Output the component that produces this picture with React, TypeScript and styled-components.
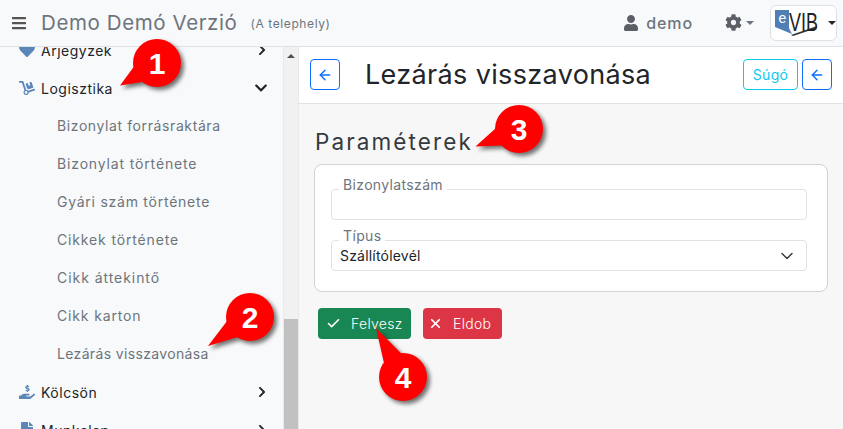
import React from 'react';
import styled, { createGlobalStyle } from 'styled-components';
import {
	FaBars,
	FaChevronDown,
	FaChevronRight,
	FaCog,
	FaDolly,
	FaFileAlt,
	FaHandHoldingUsd,
	FaHeart,
	FaUser,
} from 'react-icons/fa';
import type { IconType } from 'react-icons';
import { ArrowLeft, Check, ChevronDown, X } from 'lucide-react';

const GlobalStyle = createGlobalStyle`
	html, body {
		margin: 0;
		height: 100%;
		overflow: hidden;
	}
	body {
		font-family: Inter, "Noto Sans", "Liberation Sans", sans-serif;
		color: #212529;
	}
	#root {
		height: 100%;
	}
`;

const Page = styled.div`
	height: 429px;
	display: flex;
	flex-direction: column;
	position: relative;
	overflow: hidden;
`;

const TopBar = styled.header`
	flex: 0 0 47px;
	box-sizing: border-box;
	display: flex;
	align-items: center;
	background: #f8f9fa;
	border-bottom: 1px solid #dee2e6;
	padding: 0 6px 1px 11px;
	color: #6c757d;
`;

const Burger = styled(FaBars)`
	color: #555;
`;

const Brand = styled.span`
	margin-left: 14px;
	font-size: 20.5px;
	letter-spacing: 0.6px;
	white-space: nowrap;
`;

const Site = styled.span`
	margin-left: 13px;
	font-size: 12px;
	letter-spacing: 0.6px;
	white-space: nowrap;
	padding-top: 1px;
`;

const TopRight = styled.div`
	margin-left: auto;
	display: flex;
	align-items: center;
	color: #5a6066;
`;

const UserName = styled.span`
	margin-left: 7px;
	font-size: 16px;
	font-weight: 500;
	letter-spacing: 0.9px;
	color: #6c757d;
`;

const Settings = styled.span`
	margin-left: 32px;
	display: flex;
	align-items: center;
`;

const Caret = styled.i<{ $color: string; $gap: number }>`
	display: block;
	margin-left: ${({ $gap }) => $gap}px;
	border-top: 4px solid ${({ $color }) => $color};
	border-left: 4px solid transparent;
	border-right: 4px solid transparent;
`;

const LogoButton = styled.div`
	margin-left: 16px;
	width: 67px;
	height: 36px;
	box-sizing: border-box;
	background: #fff;
	border: 1px solid #dee2e6;
	border-radius: 6px;
	display: flex;
	align-items: center;
	padding-left: 4px;
	margin-top: 1px;
`;

const Body = styled.div`
	flex: 1;
	min-height: 0;
	display: flex;
`;

const Sidebar = styled.nav`
	flex: 0 0 298px;
	display: flex;
	background: #f8f9fa;
	overflow: hidden;
`;

const Menu = styled.ul`
	flex: 1;
	list-style: none;
	margin: -16px 0 0;
	padding: 0;
`;

const MenuRow = styled.li`
	height: 38px;
	box-sizing: border-box;
	display: flex;
	align-items: center;
	padding: 0 15px 0 19px;
	font-size: 14px;
	letter-spacing: 0.5px;
	white-space: nowrap;
`;

const SubRow = styled.li<{ $track: number }>`
	height: 38px;
	display: flex;
	align-items: center;
	padding: 0 0 2px 57px;
	box-sizing: border-box;
	font-size: 14px;
	letter-spacing: ${({ $track }) => $track}px;
	color: #6c757d;
	white-space: nowrap;
`;

const MenuIcon = styled.span`
	width: 22px;
	display: flex;
	color: #5b86b8;
	font-size: 16px;
`;

const MenuArrow = styled.span<{ $open?: boolean }>`
	margin-left: auto;
	display: flex;
	font-size: ${({ $open }) => ($open ? '14px' : '12px')};
	color: #212529;
`;

const ScrollTrack = styled.div`
	flex: 0 0 15px;
	display: flex;
	flex-direction: column;
	background: #f1f1f1;
	border-left: 1px solid #e9e9e9;
	box-sizing: border-box;
`;

const ScrollUp = styled.i`
	display: block;
	margin: 7px auto 0;
	border-bottom: 4px solid #505050;
	border-left: 4px solid transparent;
	border-right: 4px solid transparent;
`;

const ScrollThumb = styled.div`
	margin-top: auto;
	height: 110px;
	background: #c1c1c1;
`;

const Main = styled.main`
	flex: 1;
	min-width: 0;
	display: flex;
	flex-direction: column;
	background: #f7f7f7;
	border-left: 1px solid #e9e9e9;
`;

const TitleBar = styled.div`
	flex: 0 0 57px;
	box-sizing: border-box;
	display: flex;
	align-items: center;
	gap: 4px;
	background: #fff;
	border-bottom: 1px solid #dee2e6;
	padding: 0 11px 1px 11px;
`;

const OutlineButton = styled.button<{ $tone: string; $wide?: boolean }>`
	width: ${({ $wide }) => ($wide ? '55px' : '30px')};
	height: 31px;
	padding: 0;
	display: flex;
	align-items: center;
	justify-content: center;
	background: #fff;
	border: 1px solid ${({ $tone }) => $tone};
	border-radius: 4px;
	color: ${({ $tone }) => $tone};
	font: inherit;
	font-size: 14px;
	letter-spacing: 0.3px;
`;

const PageTitle = styled.h1`
	flex: 1;
	margin: 0 0 0 21px;
	font-size: 27px;
	font-weight: 400;
	letter-spacing: 0.35px;
	white-space: nowrap;
`;

const Content = styled.div`
	padding: 24px 15px 0;
`;

const SectionTitle = styled.h2`
	margin: 0 0 9px 1px;
	font-size: 22.5px;
	line-height: 27px;
	font-weight: 400;
	letter-spacing: 2.1px;
	color: #343a40;
`;

const Card = styled.section`
	height: 128px;
	box-sizing: border-box;
	padding: 24px 20px 0 16px;
	background: #fff;
	border: 1px solid #d3d3d3;
	border-radius: 8px;
	display: flex;
	flex-direction: column;
	gap: 20px;
`;

const Field = styled.div`
	position: relative;
	height: 31px;
	box-sizing: border-box;
	border: 1px solid #dee2e6;
	border-radius: 4px;
	display: flex;
	align-items: center;
	justify-content: space-between;
	padding: 0 9px 0 8px;
	font-size: 14px;
	letter-spacing: 0.2px;
`;

const FieldLabel = styled.label`
	position: absolute;
	left: 7px;
	top: -14px;
	padding: 0 4px;
	background: #fff;
	line-height: 18px;
	height: 18px;
	font-size: 14px;
	letter-spacing: 0.35px;
	color: #6c757d;
`;

const Actions = styled.div`
	display: flex;
	gap: 12px;
	margin: 16px 0 0 4px;
`;

const ActionButton = styled.button<{ $bg: string; $width: number; $pad: number }>`
	width: ${({ $width }) => $width}px;
	height: 31px;
	box-sizing: border-box;
	padding: 0 0 0 ${({ $pad }) => $pad}px;
	display: flex;
	align-items: center;
	gap: 10px;
	border: 0;
	border-radius: 4px;
	background: ${({ $bg }) => $bg};
	color: #fff;
	font: inherit;
	font-size: 14px;
	font-weight: 300;
	letter-spacing: 0.3px;
`;

const CalloutMark = styled.svg<{ $left: number; $top: number }>`
	position: absolute;
	left: ${({ $left }) => $left}px;
	top: ${({ $top }) => $top}px;
	overflow: visible;
`;

const CalloutDigit = styled.text`
	font-family: "Liberation Sans", Arial, sans-serif;
	font-size: 30px;
	font-weight: 700;
	fill: #fff;
`;

const SideItem = ({
	icon: Icon,
	open,
	children,
}: {
	icon: IconType;
	open?: boolean;
	children: string;
}) => (
	<MenuRow>
		<MenuIcon>
			<Icon />
		</MenuIcon>
		{children}
		<MenuArrow $open={open}>{open ? <FaChevronDown /> : <FaChevronRight />}</MenuArrow>
	</MenuRow>
);

const Callout = ({
	n,
	cx,
	cy,
	tx,
	ty,
}: {
	n: number;
	cx: number;
	cy: number;
	tx: number;
	ty: number;
}) => {
	// tail leaves the circle at right angles to the line towards the tip
	const r = 24;
	const dx = tx - cx;
	const dy = ty - cy;
	const len = Math.hypot(dx, dy);
	const ux = dx / len;
	const uy = dy / len;
	const spread = 12;
	const bx = ux * 14;
	const by = uy * 14;
	const a = `${bx - uy * spread},${by + ux * spread}`;
	const b = `${bx + uy * spread},${by - ux * spread}`;
	return (
		<CalloutMark $left={cx} $top={cy} width="1" height="1">
			<g style={{ filter: 'drop-shadow(3px 3px 2px rgba(0,0,0,0.55))' }}>
				<circle r={r} fill="#fe0000" />
				<polygon points={`${a} ${dx},${dy} ${b}`} fill="#fe0000" />
			</g>
			<CalloutDigit textAnchor="middle" y="11">
				{n}
			</CalloutDigit>
		</CalloutMark>
	);
};

const EvirLogo = () => (
	<svg width="48" height="32" viewBox="0 0 48 32" style={{ overflow: 'visible' }}>
		<path d="M0 3h14v18l3 6L0 20z" fill="#4f7fb5" />
		<text x="3.5" y="16" fontSize="14" fontFamily="Liberation Sans" fill="#fff">
			e
		</text>
		<path d="M16 28l26-9v2l-24 8z" fill="#333" />
		<text
			x="14"
			y="24"
			fontSize="25"
			fontFamily="Liberation Sans"
			fill="#222"
			textLength="29"
			lengthAdjust="spacingAndGlyphs"
		>
			VIB
		</text>
	</svg>
);

const subItems = [
	{ label: 'Bizonylat forrásraktára', track: 0.6 },
	{ label: 'Bizonylat története', track: 0.85 },
	{ label: 'Gyári szám története', track: 0.75 },
	{ label: 'Cikkek története', track: 0.85 },
	{ label: 'Cikk áttekintő', track: 0.95 },
	{ label: 'Cikk karton', track: 0.85 },
	{ label: 'Lezárás visszavonása', track: 0.35 },
];

export default function App() {
	return (
		<Page>
			<GlobalStyle />
			<TopBar>
				<Burger size={16} />
				<Brand>Demo Demó Verzió</Brand>
				<Site>(A telephely)</Site>
				<TopRight>
					<FaUser size={16} />
					<UserName>demo</UserName>
					<Settings>
						<FaCog size={17} />
						<Caret $color="#6c757d" $gap={4} />
					</Settings>
					<LogoButton>
						<EvirLogo />
						<Caret $color="#212529" $gap={5} />
					</LogoButton>
				</TopRight>
			</TopBar>
			<Body>
				<Sidebar>
					<Menu>
						<SideItem icon={FaHeart}>Árjegyzék</SideItem>
						<SideItem icon={FaDolly} open>
							Logisztika
						</SideItem>
						{subItems.map(({ label, track }) => (
							<SubRow key={label} $track={track}>
								{label}
							</SubRow>
						))}
						<SideItem icon={FaHandHoldingUsd}>Kölcsön</SideItem>
						<SideItem icon={FaFileAlt}>Munkalap</SideItem>
					</Menu>
					<ScrollTrack>
						<ScrollUp />
						<ScrollThumb />
					</ScrollTrack>
				</Sidebar>
				<Main>
					<TitleBar>
						<OutlineButton $tone="#0d6efd">
							<ArrowLeft size={16} strokeWidth={2.2} />
						</OutlineButton>
						<PageTitle>Lezárás visszavonása</PageTitle>
						<OutlineButton $tone="#0dcaf0" $wide>
							Súgó
						</OutlineButton>
						<OutlineButton $tone="#0d6efd">
							<ArrowLeft size={16} strokeWidth={2.2} />
						</OutlineButton>
					</TitleBar>
					<Content>
						<SectionTitle>Paraméterek</SectionTitle>
						<Card>
							<Field>
								<FieldLabel>Bizonylatszám</FieldLabel>
							</Field>
							<Field>
								<FieldLabel>Típus</FieldLabel>
								Szállítólevél
								<ChevronDown size={20} strokeWidth={1.7} color="#343a40" />
							</Field>
						</Card>
						<Actions>
							<ActionButton $bg="#198754" $width={93} $pad={8}>
								<Check size={15} strokeWidth={2.6} />
								Felvesz
							</ActionButton>
							<ActionButton $bg="#dc3545" $width={79} $pad={5}>
								<X size={15} strokeWidth={2.8} />
								Eldob
							</ActionButton>
						</Actions>
					</Content>
				</Main>
			</Body>
			<Callout n={1} cx={157} cy={62.5} tx={120} ty={85} />
			<Callout n={2} cx={250} cy={317} tx={208} ty={346} />
			<Callout n={3} cx={518.5} cy={128.5} tx={475} ty={146} />
			<Callout n={4} cx={403} cy={377} tx={376} ty={328} />
		</Page>
	);
}
